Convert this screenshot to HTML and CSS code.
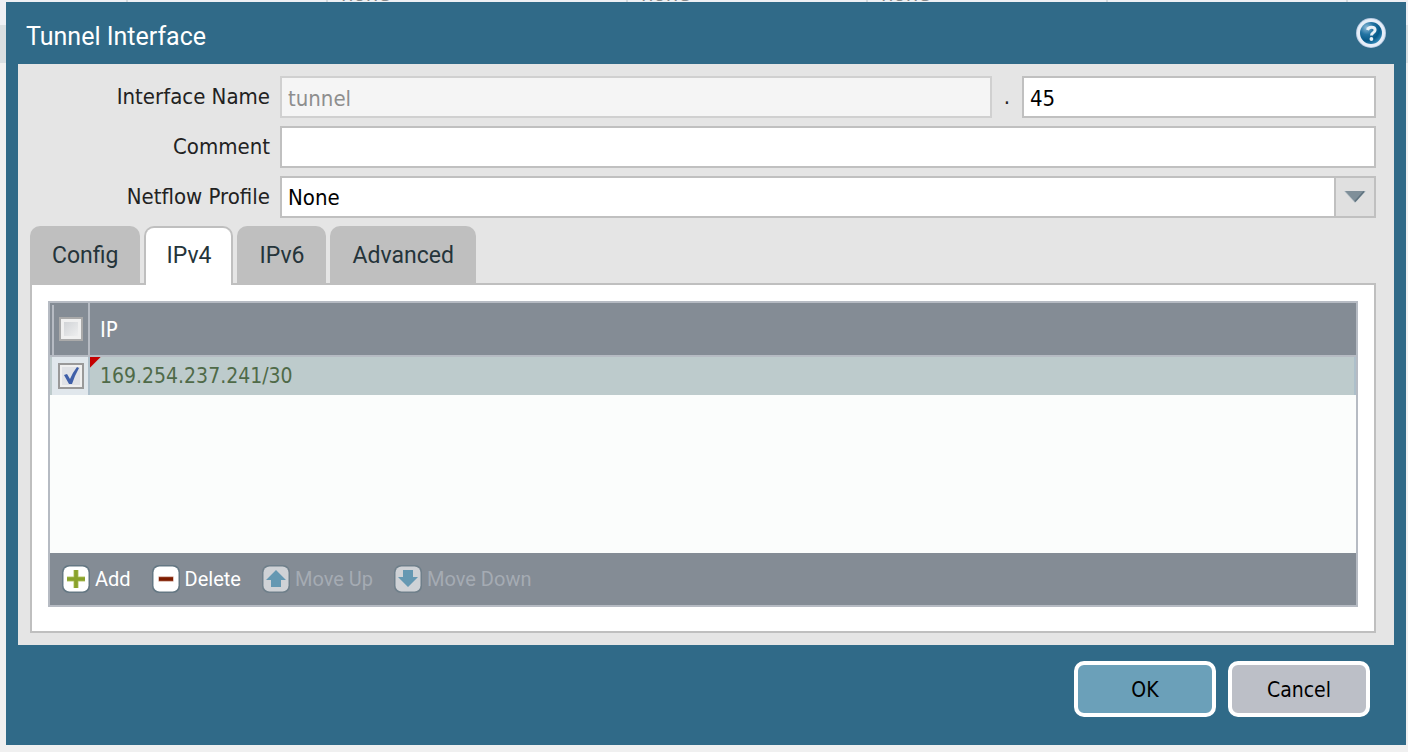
FILE: index.html
```html
<!DOCTYPE html>
<html lang="en">
<head>
<meta charset="utf-8">
<title>Tunnel Interface</title>
<meta name="viewport" content="width=device-width, initial-scale=1">
<link rel="stylesheet" href="styles.css">
</head>
<body>
<div class="backdrop" aria-hidden="true">
  <div class="backdrop-row">
    <span class="c1"></span><span class="c2"></span><span class="c3">none</span><span class="c4">none</span><span class="c5">none</span><span class="c6"></span><span class="c7"></span>
  </div>
  <div class="backdrop-row stripe"></div>
</div>
<main class="dialog" role="dialog" aria-labelledby="dialog-title">
  <header class="dialog-header">
    <h1 id="dialog-title">Tunnel Interface</h1>
    <button class="help" type="button" aria-label="Help">
      <svg viewBox="0 0 30 30" width="30" height="30">
        <defs>
          <radialGradient id="ball" cx="0.3" cy="0.25" r="0.8">
            <stop offset="0" stop-color="#8fbbd8"/>
            <stop offset="0.4" stop-color="#2374a3"/>
            <stop offset="0.75" stop-color="#075988"/>
            <stop offset="1" stop-color="#2f85b4"/>
          </radialGradient>
        </defs>
        <circle cx="15" cy="15" r="15" fill="#b9cce3"/>
        <circle cx="15" cy="15" r="14" fill="#e6eef8"/>
        <circle cx="15" cy="15" r="11" fill="url(#ball)"/>
        <path d="M11.500 12q.8-2.700 4-2.700 3.600 0 3.600 2.800 0 1.500-1.900 2.700-1.700 1-1.700 2.700" fill="none" stroke="#e9f1f7" stroke-width="3"/>
        <circle cx="15.400" cy="21" r="1.900" fill="#e9f1f7"/>
      </svg>
    </button>
  </header>
  <form class="dialog-body">
    <div class="form-row">
      <label for="if-name">Interface Name</label>
      <div class="name-fields">
        <input class="field" id="if-name" type="text" value="tunnel" disabled>
        <span class="dot">.</span>
        <input class="field" type="text" value="45" aria-label="Interface number">
      </div>
    </div>
    <div class="form-row">
      <label for="comment">Comment</label>
      <input class="field" id="comment" type="text">
    </div>
    <div class="form-row">
      <label for="netflow">Netflow Profile</label>
      <div class="combo">
        <select class="field" id="netflow"><option>None</option></select>
        <span class="combo-arrow"><svg viewBox="0 0 22 14" width="22" height="14"><path d="M0 1H22L11 13Z" fill="#b9c3c9"/><path d="M1 1H21L11 12Z" fill="#7f8f99"/><path d="M20 1.500 11 11.500" stroke="#5f737f" stroke-width="1.500"/></svg></span>
      </div>
    </div>
    <div class="tabs" role="tablist">
      <button class="tab" type="button" role="tab">Config</button>
      <button class="tab active" type="button" role="tab" aria-selected="true">IPv4</button>
      <button class="tab" type="button" role="tab">IPv6</button>
      <button class="tab" type="button" role="tab">Advanced</button>
    </div>
    <section class="panel" role="tabpanel">
      <div class="grid">
        <table>
          <thead>
            <tr><th class="check"><input type="checkbox" aria-label="Select all"></th><th>IP</th></tr>
          </thead>
          <tbody>
            <tr><td class="check"><input type="checkbox" aria-label="Select 169.254.237.241/30" checked></td><td class="edited">169.254.237.241/30</td></tr>
          </tbody>
        </table>
        <div class="toolbar">
          <button type="button">
            <svg viewBox="0 0 30 30" width="30" height="30"><rect x="1" y="1" width="28" height="28" rx="7" fill="#647783"/><rect x="2.500" y="2.500" width="25" height="25" rx="6" fill="#fff"/><path d="M15 6V24M6 15H24" stroke="#b9ca70" stroke-width="5"/><path d="M15 6V24M6 15H24" stroke="#8aa22c" stroke-width="3.600"/></svg>
            Add
          </button>
          <button type="button">
            <svg viewBox="0 0 30 30" width="30" height="30"><rect x="1" y="1" width="28" height="28" rx="7" fill="#647783"/><rect x="2.500" y="2.500" width="25" height="25" rx="6" fill="#fff"/><path d="M7.500 15H22.500" stroke="#c08a78" stroke-width="5"/><path d="M8 15H22" stroke="#7d1c00" stroke-width="3.600"/></svg>
            Delete
          </button>
          <button type="button" disabled>
            <svg viewBox="0 0 30 30" width="30" height="30"><rect x="1" y="1" width="28" height="28" rx="7" fill="#6f7f8a"/><rect x="2.500" y="2.500" width="25" height="25" rx="6" fill="#cfd2d6"/><path d="M15 6 25 16H20V23H10V16H5Z" fill="#6598b2"/></svg>
            Move Up
          </button>
          <button type="button" disabled>
            <svg viewBox="0 0 30 30" width="30" height="30"><rect x="1" y="1" width="28" height="28" rx="7" fill="#6f7f8a"/><rect x="2.500" y="2.500" width="25" height="25" rx="6" fill="#cfd2d6"/><path d="M15 23 25 13H20V6H10V13H5Z" fill="#6598b2"/></svg>
            Move Down
          </button>
        </div>
      </div>
    </section>
  </form>
  <footer class="dialog-footer">
    <button class="action primary" type="button">OK</button>
    <button class="action" type="button">Cancel</button>
  </footer>
</main>
</body>
</html>
```
FILE: styles.css
```css
* { box-sizing: border-box; }

body {
  margin: 0;
  min-height: 100vh;
  padding: 2px 2px 7px 6px;
  display: flex;
  background: #f0f0f0;
  color: #222;
  font: 22px/26px "DejaVu Sans Condensed", Tahoma, "Noto Sans", sans-serif;
}

button, input, select { font: inherit; }
button { cursor: pointer; }
svg { display: block; flex: none; }

.backdrop {
  position: absolute;
  inset: 0;
  overflow: hidden;
  color: #888;
}
.backdrop-row { display: flex; height: 43px; margin-top: -18px; line-height: 24px; background: #eef0f4; }
.backdrop-row span { border-right: 2px solid #d5d9dd; padding-left: 13px; flex: none; }
.backdrop-row.stripe { height: 38px; margin-top: 0; background: #d9dfe2; }
.c1 { width: 128px; }
.c2 { width: 200px; }
.c3 { width: 300px; }
.c4, .c5, .c6, .c7 { width: 240px; }

.dialog {
  position: relative;
  flex: 1;
  display: flex;
  flex-direction: column;
  padding: 0 12px;
  background: #306a88;
}
.dialog-header {
  display: flex;
  align-items: center;
  justify-content: space-between;
  height: 62px;
  padding: 0 8px;
}
.dialog-header h1 {
  margin: 0;
  padding-top: 8px;
  color: #fff;
  font: 400 25px/36px Roboto, "Liberation Sans", sans-serif;
}
.help { padding: 0; border: 0; background: none; }

.dialog-body {
  flex: 1;
  display: flex;
  flex-direction: column;
  padding: 12px 18px 12px 12px;
  background: #e5e5e5;
}
.form-row {
  display: grid;
  grid-template-columns: 240px 1fr;
  column-gap: 10px;
  align-items: center;
  margin-bottom: 8px;
}
.form-row label { text-align: right; }
.field {
  width: 100%;
  height: 42px;
  min-width: 0;
  padding: 2px 6px 0;
  border: 2px solid #c0c0c0;
  border-radius: 0;
  background: #fff;
  color: #000;
}
.field:disabled { border-color: #d0d0d0; background: #f5f5f5; color: #8e8e8e; }
.name-fields { display: grid; grid-template-columns: 712fr 30px 354fr; align-items: center; }
.dot { text-align: center; }
.combo { display: grid; grid-template-columns: 1fr 42px; }
.combo .field { grid-area: 1 / 1 / 2 / 3; appearance: none; }
.combo-arrow {
  grid-area: 1 / 2;
  display: grid;
  place-items: center;
  border: 2px solid #c0c0c0;
  background: #e0e0e0;
  pointer-events: none;
}

.tabs { display: flex; gap: 4px; }
.tab {
  height: 57px;
  padding: 2px 22px 0;
  border: 0;
  border-radius: 10px 10px 0 0;
  background: #bfbfbf;
  color: #25343a;
  font: 400 23px/32px Roboto, "Liberation Sans", sans-serif;
}
.tab.active {
  height: 59px;
  margin-bottom: -2px;
  padding: 0 20px 2px;
  border: 2px solid #bfbfbf;
  border-bottom: 0;
  background: #fff;
  z-index: 1;
}
.panel {
  flex: 1;
  display: flex;
  padding: 16px 16px 24px;
  border: 2px solid #bfbfbf;
  background: #fff;
}
.grid {
  flex: 1;
  display: flex;
  flex-direction: column;
  border: 2px solid #b6bbc3;
  background: #fbfdfc;
}
table { width: 100%; border-collapse: separate; border-spacing: 0; }
th {
  height: 54px;
  padding: 2px 10px 0;
  border-bottom: 2px solid #b6bbc3;
  background: #848c95;
  color: #fff;
  font-weight: 400;
  text-align: left;
}
td {
  height: 38px;
  padding: 0 10px;
  background: #bdcbcc;
  border-right: 2px solid #adbfca;
  color: #4f6a48;
  font-size: 21px;
}
th.check {
  width: 40px;
  padding: 0 0 0 4px;
  background: linear-gradient(#b6bbc3, #b6bbc3) 2px 2px / 2px 100% no-repeat, #848c95;
  border-right: 2px solid #b6bbc3;
}
td.check { padding: 0 0 0 2px; border-left: 2px solid #bdcbcc; background: #e0e7ec; }
.edited { background: linear-gradient(135deg, #c50000 7px, #bdcbcc 8px); }
.check input {
  appearance: none;
  display: block;
  width: 24px;
  height: 24px;
  margin: 0 auto;
  border: 2px solid #aaa;
  background: linear-gradient(135deg, #cbced2, #f4f4f4);
  box-shadow: inset 0 0 0 3px #f0f0f0;
}
td.check input {
  width: 26px;
  height: 26px;
  border-color: #999;
  background: url("data:image/svg+xml,%3Csvg xmlns='http://www.w3.org/2000/svg' viewBox='0 0 22 22'%3E%3Cpath d='M4 10L7 9L10 14Q13 7 17 2L19 3Q15 10 12 19H9Z' fill='%233f5fa8'/%3E%3C/svg%3E") center / 22px no-repeat, #e0e2e6;
  box-shadow: inset 0 0 0 2px #f0f0f0;
}
.toolbar {
  display: flex;
  gap: 20px;
  align-items: center;
  height: 52px;
  margin-top: auto;
  padding: 0 11px;
  background: #848c95;
}
.toolbar button {
  display: flex;
  align-items: center;
  gap: 4px;
  padding: 0;
  border: 0;
  background: none;
  color: #fff;
  font: 400 20px/30px Roboto, "Liberation Sans", sans-serif;
}
.toolbar button:disabled { color: #a5abb3; }

.dialog-footer {
  display: flex;
  align-items: flex-start;
  justify-content: flex-end;
  gap: 12px;
  height: 100px;
  padding: 16px 24px;
}
.action {
  width: 142px;
  height: 56px;
  padding: 2px 0 0;
  border: 4px solid #fff;
  border-radius: 10px;
  background: #bcbfc7;
  color: #000;
  font-size: 21px;
}
.action.primary { background: #6ba0b9; }
```
